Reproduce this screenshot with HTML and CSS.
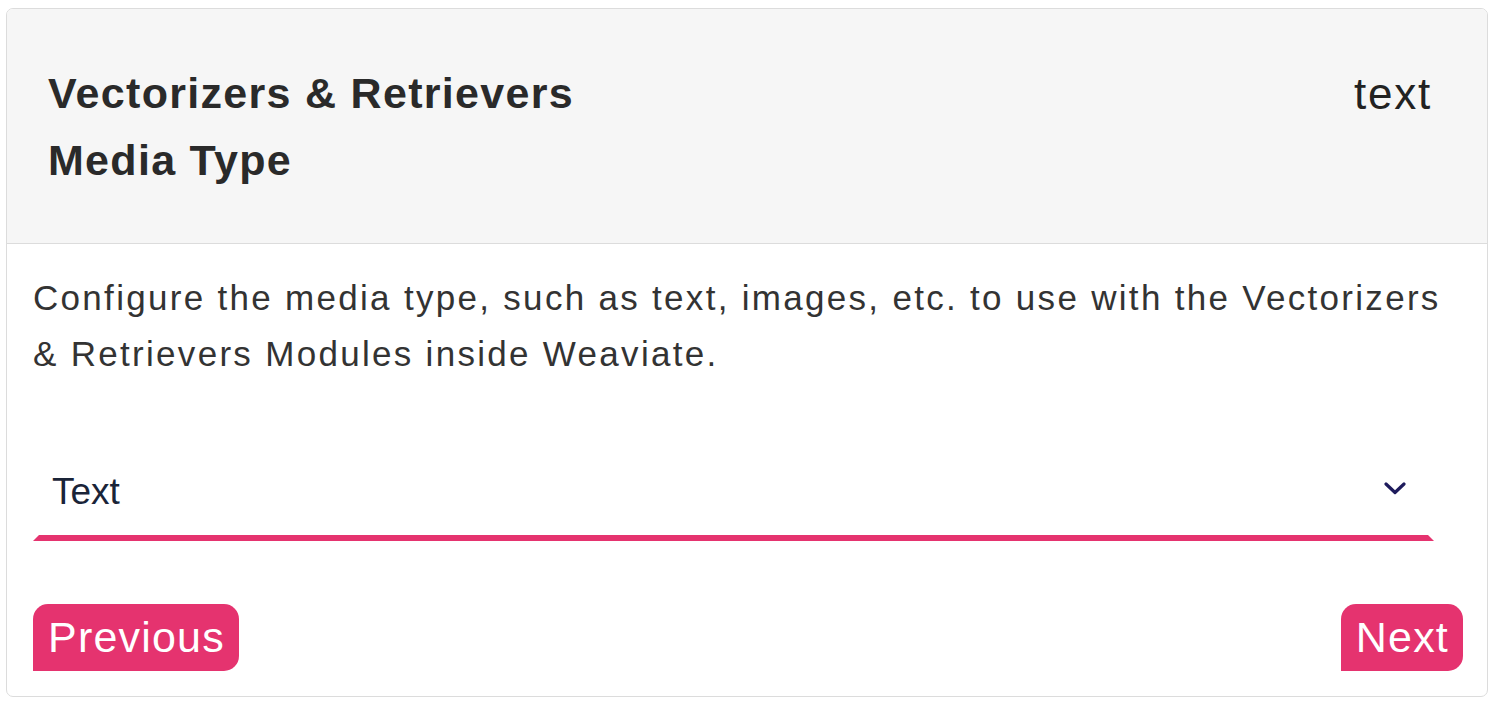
FILE: index.html
```html
<!DOCTYPE html>
<html lang="en">
<head>
<meta charset="utf-8">
<title>Vectorizers & Retrievers Media Type</title>
<link rel="stylesheet" href="styles.css">
</head>
<body>
<div class="card">
  <div class="card-header">
    <div class="title">Vectorizers &amp; Retrievers<br>Media Type</div>
    <div class="value">text</div>
  </div>
  <div class="card-body">
    <p class="desc">Configure the media type, such as text, images, etc. to use with the Vectorizers &amp; Retrievers Modules inside Weaviate.</p>
    <div class="select">
      <span class="select-text">Text</span>
      <svg class="chevron" width="22" height="13" viewBox="0 0 22 13"><path d="M2 2 L11 10.5 L20 2" fill="none" stroke="#1e1b5c" stroke-width="3.2" stroke-linecap="round" stroke-linejoin="round"/></svg>
    </div>
    <div class="actions">
      <button class="btn">Previous</button>
      <button class="btn">Next</button>
    </div>
  </div>
</div>
</body>
</html>
```
FILE: styles.css
```css
html, body {
  margin: 0;
  padding: 0;
  background: #ffffff;
}
body {
  padding: 8px 8px 0 6px;
  font-family: "Liberation Sans", Arial, sans-serif;
}
.card {
  border: 1px solid #dcdcdc;
  border-radius: 7px;
  overflow: hidden;
  height: 689px;
  box-sizing: border-box;
  display: flex;
  flex-direction: column;
}
.card-header {
  background: #f6f6f6;
  border-bottom: 1px solid #dcdcdc;
  padding: 51px 55px 49px 41px;
  display: flex;
  justify-content: space-between;
  align-items: flex-start;
}
.title {
  font-weight: 700;
  font-size: 43px;
  line-height: 67px;
  letter-spacing: 1.3px;
  color: #2a2a2a;
}
.value {
  font-size: 44px;
  line-height: 67px;
  letter-spacing: 1.8px;
  color: #222222;
}
.card-body {
  padding: 26px 24px 25px 26px;
  flex: 1;
  display: flex;
  flex-direction: column;
}
.desc {
  margin: 0;
  font-size: 35px;
  line-height: 56px;
  letter-spacing: 2.3px;
  color: #333333;
}
.select {
  margin: 55px 29px 0 0;
  height: 104px;
  box-sizing: border-box;
  border: 6px solid transparent;
  border-bottom-color: #e5336f;
  padding: 0 22px 4px 13px;
  display: flex;
  align-items: center;
  justify-content: space-between;
}
.select-text {
  font-size: 37px;
  color: #1a2438;
  margin-top: 10px;
}
.chevron {
  display: block;
  margin-top: 2px;
}
.actions {
  margin-top: auto;
  display: flex;
  justify-content: space-between;
}
.btn {
  font-family: "Liberation Sans", Arial, sans-serif;
  font-size: 43px;
  line-height: 67px;
  height: 67px;
  letter-spacing: 1.2px;
  color: #ffffff;
  background: #e5336f;
  border: none;
  padding: 0 14px 0 15px;
  border-radius: 15px 15px 15px 0;
  cursor: pointer;
}
```
